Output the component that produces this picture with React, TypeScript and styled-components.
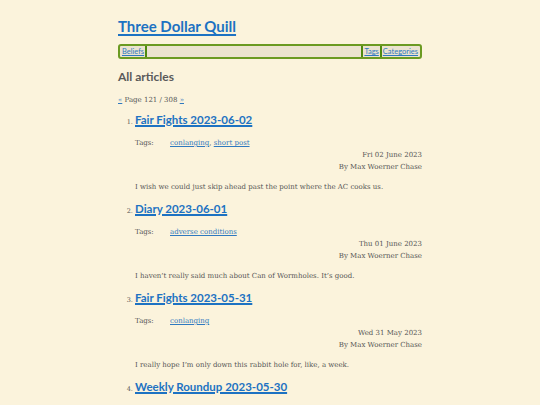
import React from 'react';
import styled, { createGlobalStyle } from 'styled-components';

const GlobalStyle = createGlobalStyle`
  html, body {
    margin: 0;
    padding: 0;
    background: #fbf3dc;
  }
  body {
    font-family: "DejaVu Serif", "Liberation Serif", serif;
    color: #555;
  }
`

const Page = styled.div`
  width: 304px;
  margin: 0 auto;
  padding-top: 15px;
`

const SiteTitle = styled.a`
  display: inline-block;
  font-family: Lato, "Open Sans", sans-serif;
  font-weight: 700;
  font-size: 15px;
  line-height: 22px;
  color: #1d72c2;
  text-decoration: underline;
  text-decoration-thickness: 2px;
  text-underline-offset: 2px;
`

const Nav = styled.nav`
  display: flex;
  margin-top: 7px;
  height: 11px;
  border: 2px solid #6b9a22;
  border-radius: 3px;
  background: #ebe3cf;
  padding: 0 1px;
`

const NavLink = styled.a<{ $side?: 'left' | 'right' }>`
  font-family: Lato, "Open Sans", sans-serif;
  font-size: 7.5px;
  line-height: 11px;
  color: #2f79bf;
  text-decoration: underline;
  padding: 0 1px;
  border-left: ${p => (p.$side === 'left' ? '2px solid #4f8a10' : 'none')};
  border-right: ${p => (p.$side === 'right' ? '2px solid #4f8a10' : 'none')};
`

const Spacer = styled.div`
  flex: 1;
`

const Heading = styled.h2`
  font-family: Lato, "Open Sans", sans-serif;
  font-size: 12px;
  font-weight: 700;
  color: #5a5a5a;
  margin: 10px 0 0;
  line-height: 16px;
`

const Pager = styled.p`
  font-size: 7px;
  margin: 10px 0 0;
  line-height: 10px;

  a {
    color: #2f79bf;
  }
`

const List = styled.ol`
  margin: 4px 0 0;
  padding-left: 17px;
  font-size: 7px;
`

const Item = styled.li`
  color: #555;
  &::marker {
    font-size: 6.5px;
    color: #555;
  }
`

const ItemTitle = styled.a`
  font-family: Lato, "Open Sans", sans-serif;
  font-size: 11.5px;
  font-weight: 700;
  line-height: 22px;
  color: #1d72c2;
  text-decoration: underline;
  text-decoration-thickness: 1.5px;
`

const TagRow = styled.div`
  display: flex;
  margin-top: 6px;
  font-size: 7px;
  line-height: 12px;
`

const TagLabel = styled.span`
  width: 35px;
`

const TagLink = styled.a`
  color: #2f79bf;
  text-decoration: underline;
`

const Meta = styled.div`
  text-align: right;
  font-size: 7px;
  line-height: 12px;
`

const Excerpt = styled.p`
  margin: 8px 0 5px;
  font-size: 7px;
  line-height: 12px;
`

type Article = {
  title: string;
  tags: string[];
  date: string;
  excerpt?: string;
};

const articles: Article[] = [
  {
    title: 'Fair Fights 2023-06-02',
    tags: ['conlanging', 'short post'],
    date: 'Fri 02 June 2023',
    excerpt: 'I wish we could just skip ahead past the point where the AC cooks us.',
  },
  {
    title: 'Diary 2023-06-01',
    tags: ['adverse conditions'],
    date: 'Thu 01 June 2023',
    excerpt: 'I haven\u2019t really said much about Can of Wormholes. It\u2019s good.',
  },
  {
    title: 'Fair Fights 2023-05-31',
    tags: ['conlanging'],
    date: 'Wed 31 May 2023',
    excerpt: 'I really hope I\u2019m only down this rabbit hole for, like, a week.',
  },
  {
    title: 'Weekly Roundup 2023-05-30',
    tags: ['weekly roundup'],
    date: 'Tue 30 May 2023',
  },
];

export default function App() {
  return (
    <>
      <GlobalStyle />
      <Page>
        <SiteTitle href="#">Three Dollar Quill</SiteTitle>
        <Nav>
          <NavLink href="#" $side="right">Beliefs</NavLink>
          <Spacer />
          <NavLink href="#" $side="left">Tags</NavLink>
          <NavLink href="#" $side="left">Categories</NavLink>
        </Nav>
        <Heading>All articles</Heading>
        <Pager>
          <a href="#">«</a> Page 121 / 308 <a href="#">»</a>
        </Pager>
        <List>
          {articles.map(a => (
            <Item key={a.title}>
              <ItemTitle href="#">{a.title}</ItemTitle>
              <TagRow>
                <TagLabel>Tags:</TagLabel>
                <span>
                  {a.tags.map((t, i) => (
                    <React.Fragment key={t}>
                      {i > 0 && ', '}
                      <TagLink href="#">{t}</TagLink>
                    </React.Fragment>
                  ))}
                </span>
              </TagRow>
              <Meta>{a.date}</Meta>
              <Meta>By Max Woerner Chase</Meta>
              {a.excerpt && <Excerpt>{a.excerpt}</Excerpt>}
            </Item>
          ))}
        </List>
      </Page>
    </>
  );
}
